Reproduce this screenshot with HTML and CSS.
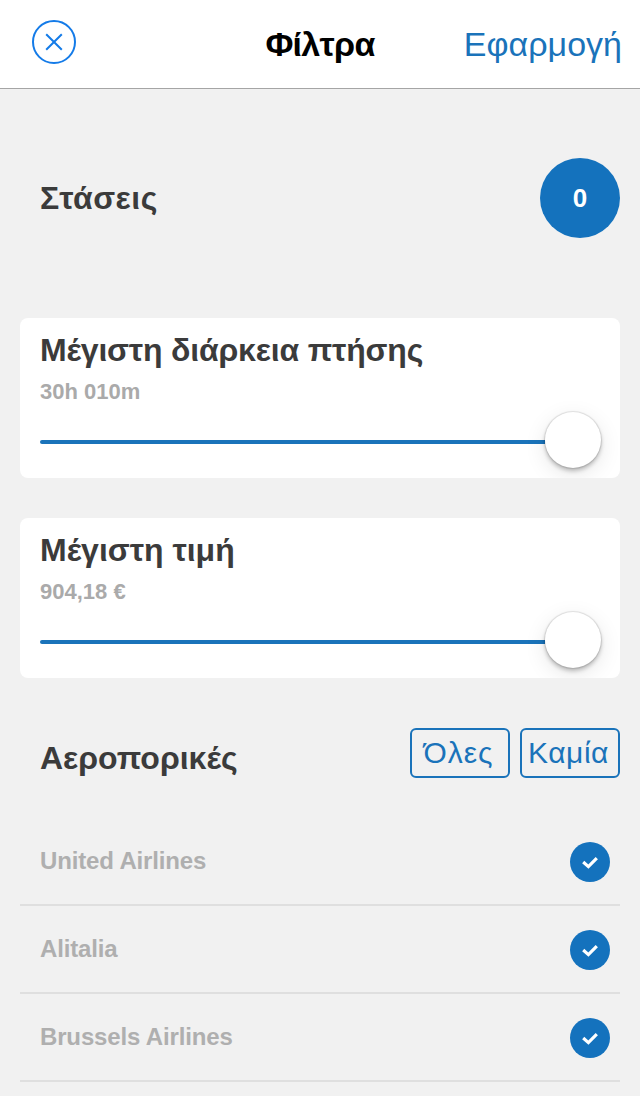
FILE: index.html
```html
<!DOCTYPE html>
<html lang="el">
<head>
  <meta charset="UTF-8">
  <meta name="viewport" content="width=device-width, initial-scale=1">
  <title>Φίλτρα</title>
  <link rel="stylesheet" href="styles.css">
</head>
<body>
  <header class="navbar">
    <button class="close" aria-label="Κλείσιμο">
      <svg width="44" height="44" viewBox="0 0 44 44" fill="none" stroke="#147be8" stroke-width="2">
        <circle cx="22" cy="22" r="21"/>
        <path d="M14.2 14.2 L29.8 29.8 M29.8 14.2 L14.2 29.8"/>
      </svg>
    </button>
    <h1 class="title">Φίλτρα</h1>
    <button class="apply">Εφαρμογή</button>
  </header>

  <main class="filters">
    <section class="stops">
      <h2 class="stops-title">Στάσεις</h2>
      <button class="stop">0</button>
    </section>

    <!-- Sliders -->
    <section class="card">
      <h2 class="duration-title">Μέγιστη διάρκεια πτήσης</h2>
      <p class="value">30h 010m</p>
      <div class="slider">
        <div class="track"></div>
        <div class="thumb"></div>
      </div>
    </section>

    <section class="card">
      <h2 class="price-title">Μέγιστη τιμή</h2>
      <p class="value">904,18 €</p>
      <div class="slider">
        <div class="track"></div>
        <div class="thumb"></div>
      </div>
    </section>

    <!-- Airlines -->
    <section class="airlines">
      <div class="airlines-head">
        <h2 class="airlines-title">Αεροπορικές</h2>
        <button class="pick pick-all">Όλες</button>
        <button class="pick pick-none">Καμία</button>
      </div>
      <ul class="list">
        <li class="row">
          <span class="name">United Airlines</span>
          <svg class="check" width="40" height="40" viewBox="0 0 40 40">
            <circle cx="20" cy="20" r="20"/>
            <path d="M13.2 20 L18.4 24.6 L26.8 16.2"/>
          </svg>
        </li>
        <li class="row">
          <span class="name">Alitalia</span>
          <svg class="check" width="40" height="40" viewBox="0 0 40 40">
            <circle cx="20" cy="20" r="20"/>
            <path d="M13.2 20 L18.4 24.6 L26.8 16.2"/>
          </svg>
        </li>
        <li class="row">
          <span class="name">Brussels Airlines</span>
          <svg class="check" width="40" height="40" viewBox="0 0 40 40">
            <circle cx="20" cy="20" r="20"/>
            <path d="M13.2 20 L18.4 24.6 L26.8 16.2"/>
          </svg>
        </li>
      </ul>
    </section>
  </main>
</body>
</html>
```

FILE: styles.css
```css
* {
  box-sizing: border-box;
}

body {
  margin: 0;
  background: #f1f1f1;
  color: #3b3b3b;
  font-family: "Liberation Sans", Arial, sans-serif;
}

h1, h2, p, ul {
  margin: 0;
  padding: 0;
}

button {
  margin: 0;
  padding: 0;
  border: none;
  background: none;
  font-family: inherit;
  cursor: pointer;
}

/* Top bar */
.navbar {
  display: grid;
  grid-template-columns: 1fr auto 1fr;
  height: 89px;
  padding: 0 18px 0 32px;
  background: #fff;
  border-bottom: 1px solid #a5a5a5;
}

.close {
  justify-self: start;
  width: 44px;
  height: 44px;
  margin-top: 20px;
}

.close svg {
  display: block;
}

.title {
  padding-top: 20px;
  margin-right: 14px;
  color: #000;
  font-size: 34px;
  font-weight: bold;
  letter-spacing: -0.7px;
  line-height: 48px;
}

.apply {
  justify-self: end;
  align-self: start;
  padding-top: 20px;
  color: #1a73ba;
  font-size: 34px;
  line-height: 48px;
}

/* Filters */
.filters {
  padding: 0 20px;
}

h2 {
  font-size: 32px;
  font-weight: bold;
  line-height: 40px;
}

.stops {
  display: flex;
  justify-content: space-between;
  align-items: center;
  height: 229px;
  padding: 0 0 11px 20px;
}

.stops-title {
  letter-spacing: 0.5px;
}

.duration-title {
  letter-spacing: -0.17px;
}

.stop {
  width: 80px;
  height: 80px;
  border-radius: 50%;
  background: #1472bd;
  color: #fff;
  font-size: 26px;
  font-weight: bold;
}

.card {
  height: 160px;
  margin-bottom: 40px;
  padding: 12px 18px 0 20px;
  border-radius: 8px;
  background: #fff;
  overflow: hidden;
}

.value {
  margin-top: 8px;
  color: #aaa;
  font-size: 22px;
  font-weight: bold;
  line-height: 28px;
}

.slider {
  display: flex;
  align-items: center;
  height: 58px;
  margin-top: 5px;
}

.track {
  flex: 1;
  height: 4px;
  margin-top: 4px;
  border-radius: 2px 0 0 2px;
  background: #1a73ba;
}

.thumb {
  width: 56px;
  height: 56px;
  margin: 0 1px 0 0;
  border-radius: 50%;
  background: #fff;
  box-shadow: 0 0 1px 1px rgba(0, 0, 0, 0.1), 0 3px 4px rgba(0, 0, 0, 0.24), 0 6px 22px rgba(0, 0, 0, 0.1);
}

/* Airlines */
.airlines-head {
  display: flex;
  gap: 10px;
  margin-top: 50px;
  padding-left: 20px;
}

.airlines-title {
  flex: 1;
  padding-top: 10px;
}

.pick {
  width: 100px;
  height: 50px;
  border: 2px solid #1a73ba;
  border-radius: 6px;
  color: #1a73ba;
  font-size: 30px;
  line-height: 46px;
}

.pick-all {
  padding-right: 3px;
  letter-spacing: 1px;
}

.pick-none {
  padding-right: 3px;
  letter-spacing: 0.5px;
}

.list {
  margin-top: 40px;
  list-style: none;
}

.row {
  display: flex;
  justify-content: space-between;
  align-items: center;
  height: 88px;
  padding: 0 10px 0 20px;
  border-bottom: 2px solid #dfdfdf;
}

.name {
  color: #afafaf;
  font-size: 24px;
  font-weight: bold;
  letter-spacing: -0.15px;
}

.check {
  margin-top: 2px;
}

.check circle {
  fill: #1472bd;
}

.check path {
  fill: none;
  stroke: #fff;
  stroke-width: 3.2;
}
```
